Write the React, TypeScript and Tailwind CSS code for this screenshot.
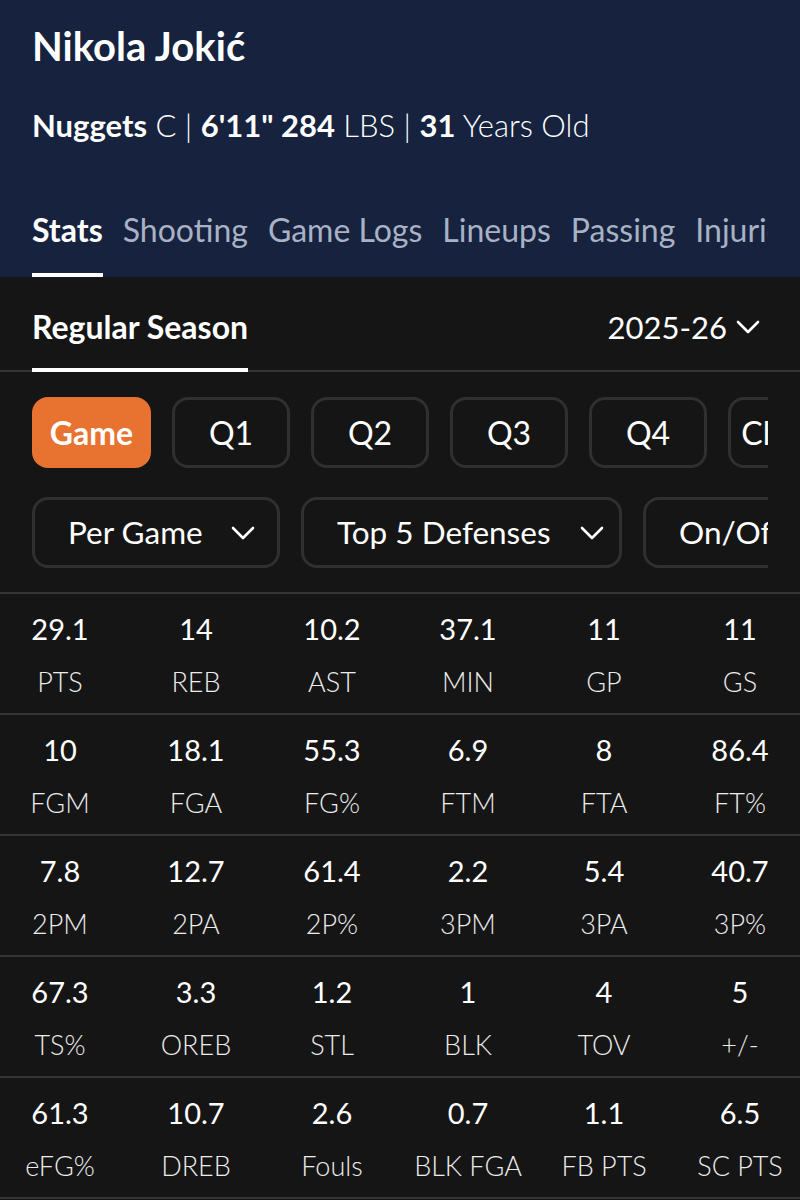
const TABS = ["Stats", "Shooting", "Game Logs", "Lineups", "Passing", "Injuries"];
const PERIODS = ["Game", "Q1", "Q2", "Q3", "Q4", "Clutch"];

const ROWS: [string, string][][] = [
  [["29.1", "PTS"], ["14", "REB"], ["10.2", "AST"], ["37.1", "MIN"], ["11", "GP"], ["11", "GS"]],
  [["10", "FGM"], ["18.1", "FGA"], ["55.3", "FG%"], ["6.9", "FTM"], ["8", "FTA"], ["86.4", "FT%"]],
  [["7.8", "2PM"], ["12.7", "2PA"], ["61.4", "2P%"], ["2.2", "3PM"], ["5.4", "3PA"], ["40.7", "3P%"]],
  [["67.3", "TS%"], ["3.3", "OREB"], ["1.2", "STL"], ["1", "BLK"], ["4", "TOV"], ["5", "+/-"]],
  [["61.3", "eFG%"], ["10.7", "DREB"], ["2.6", "Fouls"], ["0.7", "BLK FGA"], ["1.1", "FB PTS"], ["6.5", "SC PTS"]],
];

function Chevron() {
  return (
    <svg width="24" height="14" viewBox="0 0 24 14" fill="none" stroke="currentColor"
      strokeWidth="2.6" strokeLinecap="round" strokeLinejoin="round" className="shrink-0">
      <polyline points="2,2 12,12 22,2" />
    </svg>
  );
}

export default function App() {
  return (
    <div className="w-[800px] h-[1200px] overflow-hidden bg-[#151515] text-white font-['Lato',sans-serif]">
      {/* Player header */}
      <div className="bg-[#16223e] px-8 pt-[26px]">
        <h1 className="text-[40px] leading-[40px] font-bold">Nikola Jokić</h1>
        <p className="mt-[39px] text-[31px] leading-[40px] font-light whitespace-nowrap">
          <span className="font-bold">Nuggets</span> C | <span className="font-bold">6'11" 284</span> LBS |{" "}
          <span className="font-bold">31</span> Years Old
        </p>
        <div className="mt-[65px] flex gap-5 overflow-hidden whitespace-nowrap">
          {TABS.map((t, i) => (
            <div key={t}
              className={i === 0
                ? "pb-[23px] border-b-4 border-white text-[32px] leading-[40px] font-bold text-white"
                : "pb-[23px] border-b-4 border-transparent text-[32px] leading-[40px] text-[#a9b2c4]"}>
              {t}
            </div>
          ))}
        </div>
      </div>

      {/* Season selector */}
      <div className="flex items-start justify-between pl-8 pr-10 pt-[30px] border-b-2 border-[#353535]">
        <div className="pb-[21px] border-b-4 border-white -mb-[2px] text-[32px] leading-[40px] font-bold">
          Regular Season
        </div>
        <div className="flex items-center gap-[9px] text-[31px] leading-[40px]">
          2025-26
          <Chevron />
        </div>
      </div>

      {/* Period pills */}
      <div className="mx-8 mt-[25px] flex gap-[21px] overflow-hidden">
        {PERIODS.map((p, i) => (
          <div key={p}
            className={i === 0
              ? "h-[71px] w-[119px] shrink-0 rounded-2xl bg-[#e8722f] flex items-center justify-center text-[32px] font-bold"
              : "h-[71px] w-[118px] shrink-0 rounded-2xl border-[3px] border-[#303030] flex items-center justify-center text-[32px]"}>
            {p}
          </div>
        ))}
      </div>

      {/* Filter dropdowns */}
      <div className="mx-8 mt-[29px] flex gap-[21px] overflow-hidden">
        <div className="h-[71px] shrink-0 w-[248px] rounded-2xl border-[3px] border-[#303030] flex items-center pl-[33px] gap-[28px] text-[31.5px]">
          Per Game
          <Chevron />
        </div>
        <div className="h-[71px] shrink-0 w-[321px] rounded-2xl border-[3px] border-[#303030] flex items-center pl-[33px] gap-[29px] text-[31.5px]">
          Top 5 Defenses
          <Chevron />
        </div>
        <div className="h-[71px] shrink-0 w-[220px] rounded-2xl border-[3px] border-[#303030] flex items-center pl-[33px] text-[31.5px] whitespace-nowrap">
          On/Off
        </div>
      </div>

      {/* Stat grid */}
      <div className="mt-[24px] border-t-2 border-[#353535]">
        {ROWS.map((row, r) => (
          <div key={r} className="flex gap-4 h-[121px] pt-[16px] border-b-2 border-[#353535]">
            {row.map(([v, l]) => (
              <div key={l} className="w-[120px] shrink-0 flex flex-col items-center">
                <div className="text-[29px] leading-[38px]">{v}</div>
                <div className="mt-[16px] text-[27px] leading-[36px] font-light text-[#ececec] whitespace-nowrap">{l}</div>
              </div>
            ))}
          </div>
        ))}
      </div>
    </div>
  );
}
